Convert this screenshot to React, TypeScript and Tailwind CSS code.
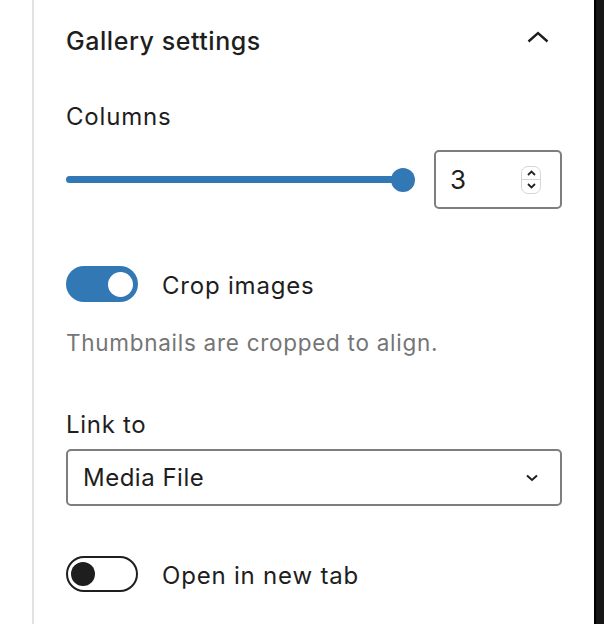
import React from "react";

function ChevronUp() {
  return (
    <svg width="22" height="12" viewBox="0 0 22 12" fill="none">
      <path d="M1.5 10.5 L11 2 L20.5 10.5" stroke="#1e1e1e" strokeWidth="2.4" />
    </svg>
  );
}

function ChevronDown() {
  return (
    <svg width="12" height="8" viewBox="0 0 12 8" fill="none">
      <path d="M1 1.5 L6 6 L11 1.5" stroke="#1e1e1e" strokeWidth="2" />
    </svg>
  );
}

function Spinner() {
  return (
    <div className="flex h-[28px] w-[20px] flex-col overflow-hidden rounded-[7px] border border-[#d6d6d6] bg-white">
      <div className="flex flex-1 items-center justify-center border-b border-[#d6d6d6]">
        <svg width="9" height="6" viewBox="0 0 9 6" fill="none">
          <path d="M1 5 L4.5 1.5 L8 5" stroke="#222" strokeWidth="1.8" />
        </svg>
      </div>
      <div className="flex flex-1 items-center justify-center">
        <svg width="9" height="6" viewBox="0 0 9 6" fill="none">
          <path d="M1 1 L4.5 4.5 L8 1" stroke="#222" strokeWidth="1.8" />
        </svg>
      </div>
    </div>
  );
}

export default function App() {
  return (
    <div
      className="flex h-[624px] w-[604px] bg-white text-[#1e1e1e]"
      style={{ fontFamily: "Inter, 'Noto Sans', sans-serif" }}
    >
      <div className="w-[32px]" />
      <div className="w-[2px] bg-[#e2e2e2]" />
      <div className="flex flex-1 flex-col px-[32px]">
        <div className="mt-[25px] flex h-[32px] items-center justify-between">
          <span className="text-[25px] leading-[32px] font-medium tracking-[0.55px]">Gallery settings</span>
          <div className="mr-[13px] -mt-[8px]">
            <ChevronUp />
          </div>
        </div>

        <div className="mt-[44px] text-[24px] leading-[32px] tracking-[0.8px]">Columns</div>

        <div className="mt-[17px] flex h-[59px] items-center gap-[19px]">
          <div className="relative flex h-[24px] flex-1 items-center">
            <div className="h-[7px] w-[calc(100%-12px)] rounded-full bg-[#3178b5]" />
            <div className="absolute right-0 top-0 h-[24px] w-[24px] rounded-full bg-[#3178b5]" />
          </div>
          <div className="flex h-[59px] w-[128px] items-center justify-between rounded-[5px] border-2 border-[#7e7e7e] pl-[14px] pr-[19px]">
            <span className="text-[26px] leading-none">3</span>
            <Spinner />
          </div>
        </div>

        <div className="mt-[57px] flex h-[36px] items-center gap-[24px]">
          <div className="flex h-[36px] w-[72px] items-center justify-end rounded-full bg-[#3178b5] pr-[5px]">
            <div className="h-[25px] w-[25px] rounded-full bg-white" />
          </div>
          <span className="mt-[3px] text-[24px] leading-[32px] tracking-[0.8px]">Crop images</span>
        </div>

        <div className="mt-[26px] text-[22.5px] leading-[30px] tracking-[0.72px] text-[#757575]">Thumbnails are cropped to align.</div>

        <div className="mt-[51px] text-[24px] leading-[32px] tracking-[0.7px]">Link to</div>

        <div className="mt-[8px] flex h-[57px] items-center justify-between rounded-[5px] border-2 border-[#7e7e7e] pl-[15px] pr-[22px]">
          <span className="text-[24px] leading-[32px] tracking-[0.5px]">Media File</span>
          <ChevronDown />
        </div>

        <div className="mt-[50px] flex h-[36px] items-center gap-[24px]">
          <div className="flex h-[36px] w-[72px] items-center rounded-full border-2 border-[#1e1e1e] pl-[3px]">
            <div className="h-[24px] w-[24px] rounded-full bg-[#1e1e1e]" />
          </div>
          <span className="mt-[3px] text-[24px] leading-[32px] tracking-[0.8px]">Open in new tab</span>
        </div>
      </div>
      <div className="w-[10px] border-l-2 border-black bg-[#161616]" />
    </div>
  );
}
